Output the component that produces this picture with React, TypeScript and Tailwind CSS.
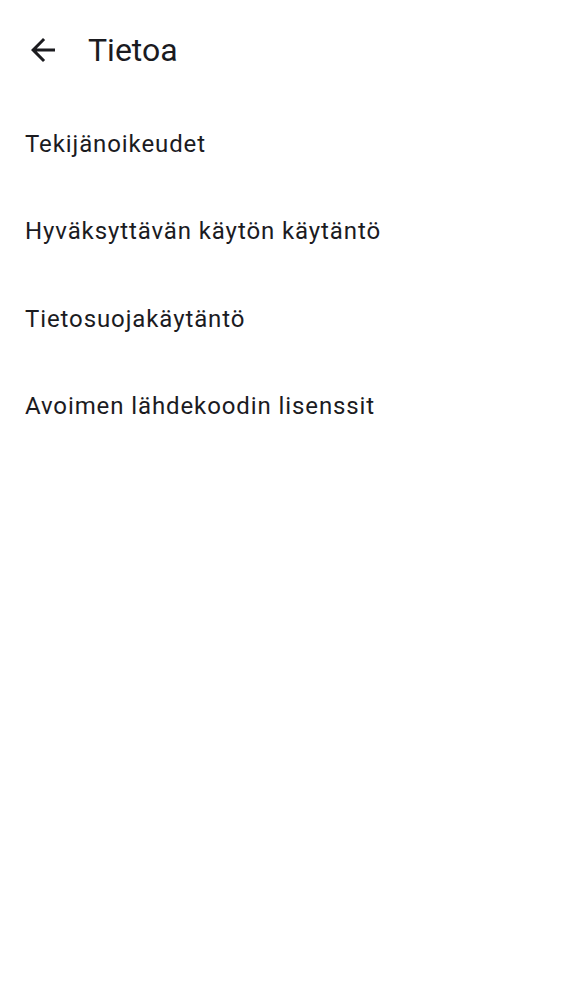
import React from "react";

const items = [
  "Tekijänoikeudet",
  "Hyväksyttävän käytön käytäntö",
  "Tietosuojakäytäntö",
  "Avoimen lähdekoodin lisenssit",
];

export default function App() {
  return (
    <div className="w-[562px] h-[1000px] bg-white text-[#1b1b1f]" style={{ fontFamily: "Roboto, sans-serif" }}>
      <div className="flex items-center h-[100px] pl-[25px]">
        <svg width="36" height="36" viewBox="0 0 24 24" className="shrink-0">
          <path d="M20 11H7.83l5.59-5.59L12 4l-8 8 8 8 1.41-1.41L7.83 13H20v-2z" fill="#1b1b1f" />
        </svg>
        <div className="ml-[27px] text-[32px] leading-none">Tietoa</div>
      </div>
      <div className="flex flex-col">
        {items.map((t) => (
          <div key={t} className="h-[87.5px] flex items-center pl-[25px] text-[24px] tracking-[0.9px]">
            {t}
          </div>
        ))}
      </div>
    </div>
  );
}
